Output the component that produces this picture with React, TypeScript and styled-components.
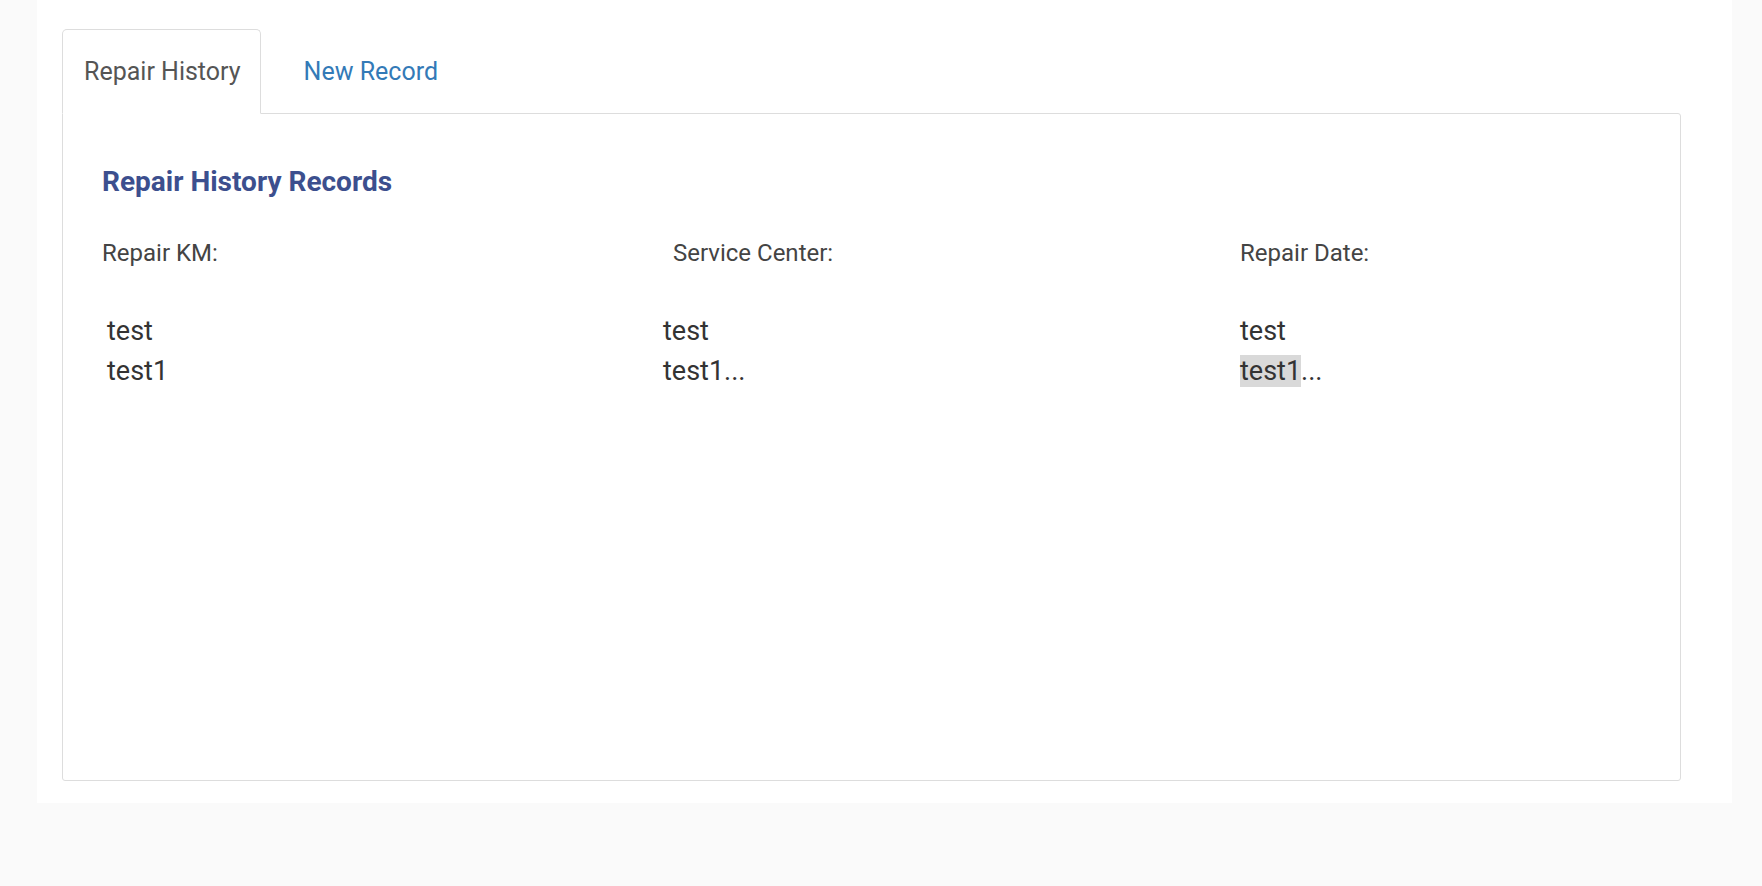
import React from "react";
import styled, { createGlobalStyle } from "styled-components";

const GlobalStyle = createGlobalStyle`
  * { box-sizing: border-box; }
  html, body {
    margin: 0;
    padding: 0;
    background: #fafafa;
    font-family: Roboto, "Liberation Sans", Arial, sans-serif;
  }
`;

const Page = styled.div`
  width: 1762px;
  min-height: 886px;
  background: #fafafa;
  padding-left: 37px;
`;

const Sheet = styled.div`
  width: 1695px;
  background: #ffffff;
  padding: 29px 51px 22px 25px;
`;

const TabList = styled.div`
  display: flex;
  align-items: flex-end;
  height: 84px;
`;

const Tab = styled.div<{ $active?: boolean }>`
  position: relative;
  z-index: 1;
  display: flex;
  align-items: center;
  height: 85px;
  margin-bottom: -1px;
  font-size: 25px;
  line-height: 29px;
  cursor: pointer;
  ${({ $active }) =>
    $active
      ? `
    padding: 0 19px 0 21px;
    color: #555555;
    background: #ffffff;
    border: 1px solid #dddddd;
    border-bottom: 1px solid #ffffff;
    border-radius: 5px 5px 0 0;
  `
      : `
    padding: 0 35px 0 42px;
    color: #337ab7;
    background: transparent;
    border: 1px solid transparent;
  `}
`;

const Panel = styled.div`
  height: 668px;
  border: 1px solid #dddddd;
  border-radius: 0 3px 3px 3px;
  padding: 52px 39px 0 39px;
`;

const Title = styled.h2`
  margin: 0;
  font-size: 28px;
  line-height: 32px;
  font-weight: 700;
  color: #3c4f8e;
`;

const HeaderRow = styled.div`
  display: grid;
  grid-template-columns: 571px 567px 1fr;
  margin-top: 41px;
`;

const HeaderCell = styled.div`
  font-size: 24px;
  line-height: 28px;
  color: #444444;
`;

const Records = styled.div`
  display: grid;
  grid-template-columns: 556px 577px 1fr;
  margin-top: 44px;
  padding-left: 5px;
`;

const Cell = styled.div`
  font-size: 27px;
  line-height: 40px;
  color: #333333;
  white-space: nowrap;
`;

const Marked = styled.span`
  background: #d9d9d9;
`;

const records = [
  { km: "test", center: "test", date: "test", clipped: false },
  { km: "test1", center: "test1...", date: "test1", clipped: true },
];

export default function App() {
  return (
    <>
      <GlobalStyle />
      <Page>
        <Sheet>
          <TabList>
            <Tab $active>Repair History</Tab>
            <Tab>New Record</Tab>
          </TabList>
          <Panel>
            <Title>Repair History Records</Title>
            <HeaderRow>
              <HeaderCell>Repair KM:</HeaderCell>
              <HeaderCell>Service Center:</HeaderCell>
              <HeaderCell>Repair Date:</HeaderCell>
            </HeaderRow>
            <Records>
              {records.map((r, i) => (
                <React.Fragment key={i}>
                  <Cell>{r.km}</Cell>
                  <Cell>{r.center}</Cell>
                  <Cell>
                    {r.clipped ? (
                      <>
                        <Marked>{r.date}</Marked>...
                      </>
                    ) : (
                      r.date
                    )}
                  </Cell>
                </React.Fragment>
              ))}
            </Records>
          </Panel>
        </Sheet>
      </Page>
    </>
  );
}
